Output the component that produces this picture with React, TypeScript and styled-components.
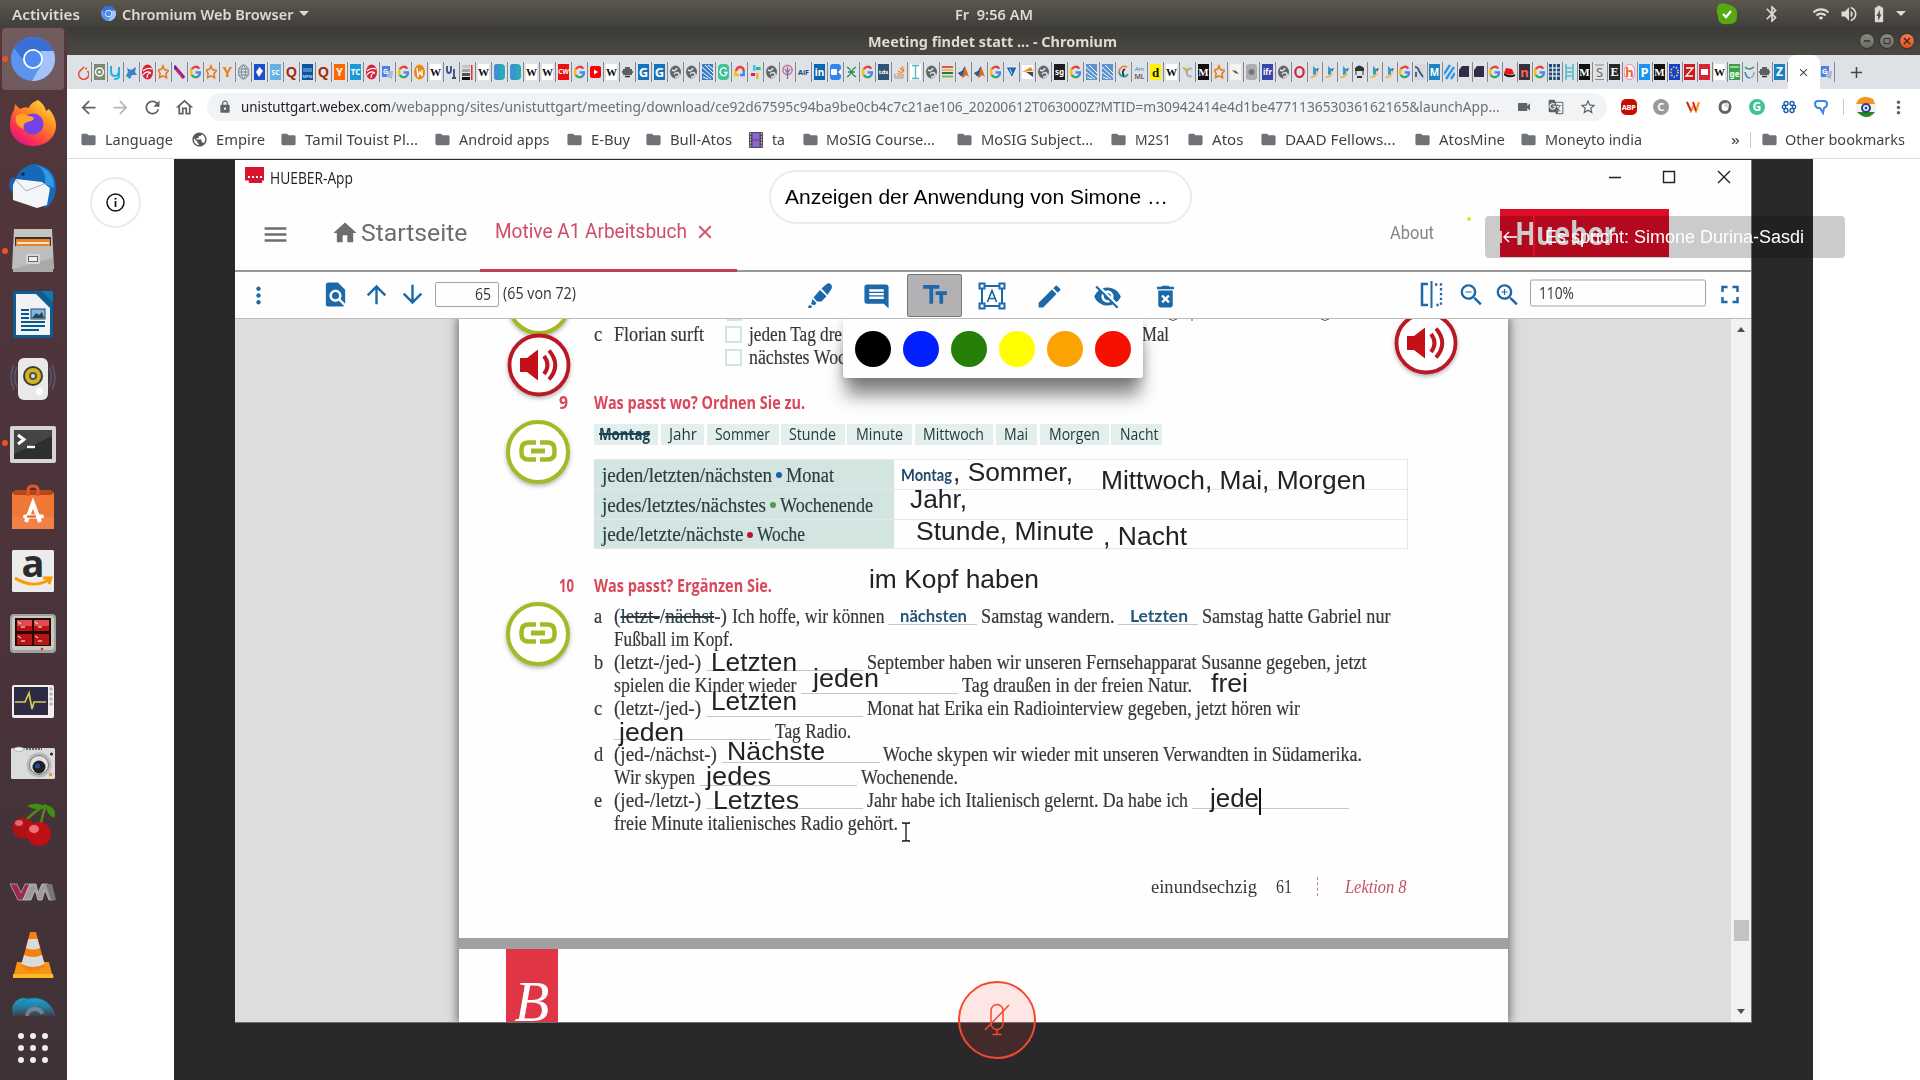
import React, { ReactNode, useLayoutEffect, useRef } from "react";
import styled, { createGlobalStyle } from "styled-components";
import {
  MdAdd, MdArrowBack, MdArrowDownward, MdArrowForward, MdArrowUpward, MdBatteryChargingFull, MdBluetooth,
  MdClose, MdComment, MdDeleteForever, MdEdit, MdFindInPage, MdFolder, MdFullscreen, MdHome, MdLock, MdMenu,
  MdMoreVert, MdOutlineHome, MdPublic, MdRefresh, MdStarBorder, MdTextFields, MdVideocam, MdVisibilityOff,
  MdVolumeUp, MdWifi, MdZoomIn, MdZoomOut, MdGTranslate,
} from "react-icons/md";

const ui = `"Noto Sans", "Open Sans", sans-serif`;
const serif = `"Liberation Serif", serif`;
const arial = `"Liberation Sans", sans-serif`;
const blue = "#1b69a9";

const Global = createGlobalStyle`
  * { box-sizing: border-box; }
  body { margin: 0; background: #fff; overflow: hidden; }
  svg { display: block; flex: none; }
`;

/* ---------- text squeezed or widened to a column width ---------- */
const FitBox = styled.span<{ $w: number; $ml?: number }>`
  display: inline-block;
  flex: none;
  width: ${(p) => p.$w}px;
  margin-left: ${(p) => p.$ml ?? 0}px;
  white-space: pre;
`;
const FitInk = styled.span`
  display: inline-block;
  transform-origin: 0 50%;
`;
function Fit({ w, ml, children, className }: { w: number; ml?: number; children: ReactNode; className?: string }) {
  const ref = useRef<HTMLSpanElement>(null);
  useLayoutEffect(() => {
    const el = ref.current;
    if (!el) return;
    el.style.transform = "none";
    const natural = el.getBoundingClientRect().width;
    if (natural) el.style.transform = `scaleX(${w / natural})`;
  }, [w]);
  return (
    <FitBox $w={w} $ml={ml} className={className}>
      <FitInk ref={ref}>{children}</FitInk>
    </FitBox>
  );
}

/* ---------- desktop shell ---------- */
const Desktop = styled.div`
  position: relative;
  width: 1920px;
  height: 1080px;
  overflow: hidden;
  display: flex;
  flex-direction: column;
  font-family: ${ui};
`;
const TopBar = styled.div`
  height: 27px;
  flex: none;
  display: flex;
  align-items: center;
  background: linear-gradient(#5b574f, #403f3a);
  color: #dfdbd2;
  font-size: 14.5px;
  font-weight: 600;
  line-height: 26px;
`;
const At = styled.div<{ $ml: number; $w?: number; $dy?: number; $c?: string }>`
  flex: none;
  display: flex;
  align-items: center;
  justify-content: center;
  margin-left: ${(p) => p.$ml}px;
  width: ${(p) => (p.$w ? p.$w + "px" : "auto")};
  color: ${(p) => p.$c ?? "inherit"};
  transform: translateY(${(p) => p.$dy ?? 0}px);
`;
const Below = styled.div`
  flex: 1;
  display: flex;
  min-height: 0;
`;
const Dock = styled.div`
  width: 67px;
  flex: none;
  display: flex;
  flex-direction: column;
  background: linear-gradient(#53373b, #4a333b 60%, #3f3237);
`;
const DockList = styled.div`
  height: 989px;
  overflow: hidden;
  display: flex;
  flex-direction: column;
`;
const DockCell = styled.div<{ $active?: boolean }>`
  height: 64px;
  flex: none;
  position: relative;
  display: flex;
  align-items: center;
  justify-content: center;
  padding-right: 1px;
  &::before {
    content: "";
    position: absolute;
    inset: 1px 3px 1px 2px;
    border-radius: 4px;
    background: ${(p) => (p.$active ? "rgba(255,255,255,.18)" : "none")};
  }
  svg { position: relative; }
`;
const RunDot = styled.i`
  position: absolute;
  left: 2px;
  top: 29px;
  width: 6px;
  height: 6px;
  border-radius: 3px;
  background: #e95420;
`;
const AppsGrid = styled.div`
  height: 64px;
  display: grid;
  grid-template-columns: repeat(3, 6px);
  gap: 6px;
  justify-content: center;
  align-content: center;
  padding-right: 1px;
  i { width: 6px; height: 6px; border-radius: 3px; background: #eee; }
`;
const Browser = styled.div`
  flex: 1;
  display: flex;
  flex-direction: column;
  min-width: 0;
`;
const TitleBar = styled.div`
  height: 28px;
  flex: none;
  display: flex;
  align-items: center;
  background: linear-gradient(#3b3a36, #4b4942);
  color: #dfdbd2;
  font-size: 14.5px;
  line-height: 26px;
  font-weight: 700;
`;
const WinBtn = styled.div<{ $close?: boolean }>`
  width: 16px;
  height: 16px;
  margin-right: 4px;
  border-radius: 8px;
  display: flex;
  align-items: center;
  justify-content: center;
  border: 1px solid #33322e;
  background: ${(p) => (p.$close ? "linear-gradient(#f07a50,#e0521f)" : "linear-gradient(#8b8a82,#6a6962)")};
`;
const TabStrip = styled.div`
  height: 34px;
  flex: none;
  display: flex;
  background: #dee1e6;
  padding-left: 9px;
`;
const Tab = styled.div<{ $w: number }>`
  width: ${(p) => p.$w}px;
  flex: none;
  display: flex;
  align-items: center;
  justify-content: flex-end;
  &::after {
    content: "";
    width: 1px;
    height: 20px;
    margin-left: 2px;
    background: #85888c;
  }
`;
const ActiveTab = styled.div`
  width: 32px;
  padding-right: 2px;
  display: flex;
  align-items: center;
  justify-content: center;
  border-radius: 8px 8px 0 0;
  background: #fff;
  color: #45494d;
`;
const NavBar = styled.div`
  height: 34px;
  flex: none;
  display: flex;
  align-items: center;
  background: #fff;
  padding: 2px 0 0 5.6px;
  color: #5f6368;
`;
const Slot = styled.div<{ $faint?: boolean }>`
  width: 32px;
  flex: none;
  display: flex;
  justify-content: center;
  opacity: ${(p) => (p.$faint ? 0.45 : 1)};
`;
const Omnibox = styled.div`
  width: 1400px;
  height: 28px;
  margin: 0 6px;
  flex: none;
  display: flex;
  align-items: center;
  border-radius: 14px;
  background: #f1f3f4;
  font-size: 14.5px;
  line-height: 26px;
`;
const Host = styled.span`color: #202124; display: flex; height: 28px;`;
const Path = styled.span`color: #6b6f74; display: flex; margin-right: 9px; height: 28px;`;
const Divider = styled.i<{ $ml: number }>`
  width: 1px;
  height: 16px;
  margin-left: ${(p) => p.$ml}px;
  background: #c5c8cc;
`;
const ExtDisc = styled.div<{ $bg: string; $size?: number }>`
  width: 16px;
  height: 16px;
  border-radius: ${(p) => (p.$bg === "#c70d00" ? 5 : 8)}px;
  display: flex;
  align-items: center;
  justify-content: center;
  background: ${(p) => p.$bg};
  color: #fff;
  font: 700 ${(p) => p.$size ?? 12}px/16px ${ui};
  letter-spacing: -0.3px;
`;
const Bookmarks = styled.div`
  height: 36px;
  flex: none;
  display: flex;
  align-items: center;
  background: #fff;
  border-bottom: 1px solid #dadce0;
  padding: 0 0 2px 12px;
  color: #3f4246;
  font-size: 14.5px;
  line-height: 33px;
`;
const Stage = styled.div`
  height: 921px;
  margin: 0 107px;
  padding: 1px 0 0 61px;
  background: #2a282b;
`;

/* ---------- shared application window ---------- */
const AppWindow = styled.div`
  width: 1517px;
  height: 863px;
  display: flex;
  flex-direction: column;
  background: #fefefe;
  border-bottom: 1px solid #6d6d6d;
  border-right: 1px solid #77775e;
`;
const AppTitle = styled.div`
  height: 36px;
  flex: none;
  display: flex;
  align-items: center;
  color: #222;
  font: 15.5px/36px "Open Sans", sans-serif;
`;
const AppIcon = styled.div`
  width: 19px;
  height: 16px;
  margin: -6px 6px 0 10px;
  background: #d9142f;
  clip-path: polygon(0 0, 100% 0, 100% 85%, 90% 85%, 90% 100%, 20% 100%, 20% 85%, 0 85%);
  display: flex;
  align-items: flex-end;
  justify-content: center;
  &::after { content: ""; width: 14px; height: 1px; margin-bottom: 4px; border-top: 2px dotted #fff; }
`;
const AppNav = styled.div`
  height: 76px;
  flex: none;
  display: flex;
  align-items: center;
  border-bottom: 2px solid #989898;
  font-family: Roboto, sans-serif;
  color: #6d6d6d;
`;
const NavTitle = styled.div`font-size: 24px; display: flex;`;
const BookTab = styled.div`
  width: 256.5px;
  height: 76px;
  margin: 2px 0 0 13px;
  padding: 0 0 4px 15px;
  flex: none;
  display: flex;
  align-items: center;
  border-bottom: 3px solid #c43b57;
  color: #cf4c66;
  font-size: 20px;
`;
const About = styled.div`font-size: 18px; color: #858585; display: flex; margin-top: -2px;`;
const YellowDot = styled.i`width: 4px; height: 4px; border-radius: 2px; margin: -28px 0 0 33px; background: #e8dc3a;`;
const Logo = styled.div`
  width: 169px;
  height: 48px;
  margin: 0 0 0 29.5px;
  padding-left: 15px;
  display: flex;
  align-items: center;
  background: #df0c27;
  color: #fff;
  font: 700 32px/46px "Open Sans", sans-serif;
`;
const Tools = styled.div`
  height: 47px;
  flex: none;
  position: relative;
  z-index: 2;
  display: flex;
  align-items: center;
  background: #fefefe;
  border-bottom: 1px solid #bdbdbd;
  color: ${blue};
  font: 16px/24px "Open Sans", sans-serif;
`;
const Field = styled.div<{ $w: number; $h: number }>`
  width: ${(p) => p.$w}px;
  height: ${(p) => p.$h}px;
  border: 1.5px solid #a3a3a3;
  border-radius: 2px;
  color: #333;
  display: flex;
  align-items: center;
  padding: 0 8px;
`;
const TextTool = styled.div`
  width: 55px;
  height: 43px;
  border: 1px solid #77777a;
  border-radius: 2px;
  background: #b3b1b4;
  display: flex;
  align-items: center;
  justify-content: center;
`;
const Palette = styled.div`
  position: absolute;
  left: 608px;
  top: 47px;
  width: 300px;
  height: 59px;
  padding: 0 12px;
  display: flex;
  gap: 12px;
  align-items: center;
  background: #fefefe;
  border-radius: 0 0 3px 3px;
  box-shadow: 0 20px 18px -3px rgba(60, 56, 60, 0.62), 0 2px 10px rgba(0, 0, 0, 0.2);
  clip-path: inset(0 -40px -70px -40px);
`;
const Swatch = styled.i<{ $c: string }>`width: 36px; height: 36px; border-radius: 18px; background: ${(p) => p.$c};`;
const Viewer = styled.div`
  flex: 1;
  min-height: 0;
  display: flex;
  overflow: hidden;
  background: #dedddd;
`;
const Sheets = styled.div`
  width: 1049px;
  margin: 0 223px 0 224px;
  flex: none;
  background: #a09fa1;
  box-shadow: 0 0 9px 2px rgba(50, 50, 50, 0.62);
`;
const Sheet = styled.div`
  position: relative;
  height: 619px;
  padding-left: 99.5px;
  background: #fefefe;
  overflow: hidden;
`;
const NextSheet = styled.div`
  height: 90px;
  margin-top: 11px;
  padding-left: 46.5px;
  background: #fefefe;
`;
const PartMark = styled.div`
  width: 52px;
  height: 90px;
  padding: 20px 0 0 9px;
  background: #e03545;
  color: #fff;
  font: italic 57px/66px ${serif};
`;
const Scroll = styled.div`
  width: 20px;
  flex: none;
  display: flex;
  flex-direction: column;
  align-items: center;
  background: #f2f1f4;
`;
const ScrollArrow = styled.i<{ $down?: boolean; $mt: number }>`
  margin-top: ${(p) => p.$mt}px;
  border: 4.5px solid transparent;
  border-top: ${(p) => (p.$down ? "5px solid #505050" : "0")};
  border-bottom: ${(p) => (p.$down ? "0" : "5px solid #505050")};
`;
const Thumb = styled.i`width: 15px; height: 21px; margin-top: 588px; background: #c3c2c5;`;

/* ---------- worksheet ---------- */
const Line = styled.div`
  height: 22.97px;
  display: flex;
  color: #38363b;
  font: 20px/22.97px ${serif};
  -webkit-text-stroke: 0.2px #38363b;
`;
const Tail = styled.div`padding-top: 4px;`;
const Label = styled.span`
  width: 20.5px;
  margin-left: 35px;
  flex: none;
  transform: scaleX(0.92);
  transform-origin: 0 50%;
`;
const Check = styled.i`
  width: 17px;
  height: 17px;
  margin: 3px 7px 0 21px;
  border: 2px solid #cfe6e0;
  flex: none;
`;
const Heading = styled.div<{ $mt: number }>`
  height: 24px;
  margin-top: ${(p) => p.$mt}px;
  display: flex;
  color: #d9485a;
  font: 700 17px/24px "Open Sans", sans-serif;
`;
const Chips = styled.div`display: flex; gap: 2.6px; margin: 9px 0 14px 35px;`;
const Chip = styled.div<{ $w: number; $bold?: boolean }>`
  width: ${(p) => p.$w}px;
  height: 21px;
  flex: none;
  display: flex;
  background: #e2efec;
  color: #26383d;
  font: ${(p) => (p.$bold ? 700 : 500)} 16px/21px "Open Sans", sans-serif;
`;
const Strike = styled.span`text-decoration: line-through; text-decoration-thickness: 1.5px; color: #1f4450;`;
const Table = styled.div`width: 814px; margin-left: 35px; border-top: 1px solid #e6e6ea; border-right: 1px solid #e6e6ea;`;
const Row = styled.div`
  height: 29.8px;
  display: grid;
  grid-template-columns: 300px 1fr;
  border-bottom: 1px solid #e6e6ea;
`;
const Key = styled.div`
  display: flex;
  align-items: center;
  padding: 1px 0 0 8px;
  background: #d2e5e1;
  color: #2e3c40;
  font: 20px/24px ${serif};
  -webkit-text-stroke: 0.2px #2e3c40;
`;
const Article = styled.i<{ $c: string }>`width: 6px; height: 6px; border-radius: 3px; margin: 1px 4px 0; background: ${(p) => p.$c};`;
const Pen = styled.div`
  display: flex;
  padding: 2px 0 0 7px;
  color: #24486c;
  font: 700 17px/26px Lato, sans-serif;
`;
const Body = styled.div`margin-top: 7px;`;
const Blank = styled.span<{ $w: number; $ml?: number; $pad?: number }>`
  width: ${(p) => p.$w}px;
  height: 20.5px;
  flex: none;
  display: flex;
  margin-left: ${(p) => p.$ml ?? 5}px;
  padding-left: ${(p) => p.$pad ?? 0}px;
  border-bottom: 1px solid #c3c6cc;
  color: #24577a;
  -webkit-text-stroke: 0;
  font: 700 17px/21px Lato, sans-serif;
`;
const Footer = styled.div`
  margin-top: 40.5px;
  padding-left: 592px;
  display: flex;
  color: #38363b;
  font: 19px/23px ${serif};
`;
const Dashes = styled.i`height: 19px; margin: 2px 27px 0 25px; border-left: 1.5px dashed #cf7d90;`;
const Lesson = styled.span`color: #c8506a; font-style: italic; display: flex;`;
const Pin = styled.div<{ $x: number; $y: number }>`
  position: absolute;
  left: ${(p) => p.$x - 35}px;
  top: ${(p) => p.$y - 35}px;
  filter: drop-shadow(0 2px 2px rgba(0, 0, 0, 0.3));
`;
const Note = styled.div<{ $x: number; $b: number }>`
  position: absolute;
  left: ${(p) => p.$x - 459}px;
  top: ${(p) => p.$b - 319 - 24}px;
  color: #222126;
  font: 25px/30px ${arial};
  display: flex;
`;
const Caret = styled.i`width: 2px; height: 27px; margin-top: 5px; background: #111;`;
const Pointer = styled.div`position: absolute; left: 441px; top: 503px;`;
const Cut = styled.div`position: absolute; left: 268px; top: 0;`;

/* ---------- conference overlays ---------- */
const InfoBtn = styled.div`
  position: absolute;
  left: 90px;
  top: 177px;
  width: 51px;
  height: 51px;
  border: 2px solid #ebebeb;
  border-radius: 26px;
  display: flex;
  align-items: center;
  justify-content: center;
`;
const Pill = styled.div`
  position: absolute;
  left: 769px;
  top: 170px;
  width: 423px;
  height: 54px;
  padding-left: 14px;
  display: flex;
  border: 2px solid #ebebeb;
  border-radius: 27px;
  background: #fff;
  color: #000;
  font: 20px/50px ${arial};
`;
const Speaker = styled.div`
  position: absolute;
  left: 1485px;
  top: 216px;
  width: 360px;
  height: 42px;
  padding-left: 15px;
  display: flex;
  align-items: center;
  border-radius: 4px;
  background: rgba(0, 0, 0, 0.2);
  color: #fff;
  font: 18px/42px ${arial};
  &::before { content: ""; position: absolute; left: 48px; top: 0; width: 2px; height: 41px; background: #df0c27; }
`;
const MicBtn = styled.div`
  position: absolute;
  left: 958px;
  top: 981px;
  width: 78px;
  height: 78px;
  border: 2px solid #f5492f;
  border-radius: 39px;
  background: rgba(245, 73, 47, 0.13);
  display: flex;
  align-items: center;
  justify-content: center;
`;

/* ---------- favicons ---------- */
const FavBox = styled.div`width: 11px; height: 16px; overflow: hidden; display: flex; justify-content: center;`;
const L = (bg: string, fg: string, t: string, size = 12, font = ui) => (
  <svg width="11" height="16" viewBox="0 0 11 16">
    <rect width="11" height="16" fill={bg} />
    <text x="5.5" y={8 + size * 0.36} textAnchor="middle" fontSize={size} fontWeight="700" fontFamily={font} fill={fg}>{t}</text>
  </svg>
);
const S = (kids: ReactNode) => <svg width="11" height="16" viewBox="0 0 11 16">{kids}</svg>;
const favs: Record<string, ReactNode> = {
  ring: S(<><path d="M6 3L2 7a5 5 0 1 0 7.5 0" stroke="#ee4c2c" strokeWidth="1.6" fill="none" /><circle cx="8" cy="4.5" r="1" fill="#ee4c2c" /></>),
  sage: S(<><rect width="11" height="16" fill="#7c8a74" /><circle cx="5.5" cy="8" r="4" fill="none" stroke="#fff" strokeWidth="1.4" /><circle cx="5.5" cy="8" r="1.5" fill="#fff" /></>),
  U: S(<path d="M1 2v5q0 5 4 5t4-6V3M9 6v6q0 3-5 3" stroke="#25b0e6" strokeWidth="2" fill="none" />),
  bird: S(<path d="M0 12l2-4-1-4 4 2 5-3-1 5 2 3-5 0-2 4z" fill="#3a86c8" />),
  swirl: S(<><ellipse cx="5.5" cy="8" rx="5.5" ry="7.5" fill="#d6223b" /><path d="M1 7q4-4 9-2M1 11q3-5 8-2M5 14q0-5 4-5" stroke="#fff" fill="none" strokeWidth="1.2" /></>),
  star: S(<path d="M5 2l1.7 3.8 4 .6-2.6 3 .4 4.4L5 11.8 1.6 13.6l.5-4.2L0 6l3.4-.6z" fill="none" stroke="#e87a17" strokeWidth="1.6" />),
  quill: S(<><path d="M0 2l10 12" stroke="#7b1fa2" strokeWidth="3.4" /><path d="M2 5l7 9" stroke="#e02a4b" strokeWidth="1.4" /></>),
  G: S(<g fill="none" strokeWidth="2.3"><path d="M9.3 4.6A4.7 5.2 0 0 0 1.7 5.3" stroke="#ea4335" /><path d="M1.7 5.3a5 5.4 0 0 0 0 5.4" stroke="#fbbc05" /><path d="M1.7 10.7a4.7 5.2 0 0 0 6.6 1.6" stroke="#34a853" /><path d="M8.3 12.3Q10 11 10 8.3H5.6" stroke="#4285f4" /></g>),
  Y: L("none", "#f08020", "Y", 15),
  ai: S(<g fill="none" stroke="#7e8a9a" strokeWidth="1"><ellipse cx="5.5" cy="8" rx="5" ry="7" /><ellipse cx="5.5" cy="8" rx="2" ry="7" /><path d="M0 5h11M0 8h11M0 11h11" /></g>),
  dia: S(<><rect width="11" height="16" fill="#1c4fd0" /><path d="M5.5 3L9 7 5 13 2 8z" fill="#fff" /></>),
  sc: L("#63b3e4", "#fff", "SC", 7),
  Q: L("none", "#a82400", "Q", 14, "Liberation Sans"),
  mpm: S(<><rect width="11" height="16" fill="#0b56a4" /><path d="M1 5h9M1 7h9" stroke="#8fb8e4" /><text x="5.5" y="14" textAnchor="middle" fontSize="4" fill="#fff" fontFamily={ui}>MPM</text></>),
  yc: L("#f60", "#fff", "Y", 11),
  tc: L("#1a9bd7", "#fff", "TC", 8),
  tr: S(<><rect y="2" width="8" height="11" fill="#4a80ee" /><path d="M5 7h6l-1 8-5-2z" fill="#a9b8d3" /><text x="1" y="10" fontSize="7" fontWeight="700" fill="#fff" fontFamily={ui}>G</text></>),
  orb: S(<><ellipse cx="5.5" cy="8" rx="5.5" ry="7.5" fill="#e98a15" /><path d="M3 4l1 8 2-4 2 4V6" stroke="#fff" fill="none" strokeWidth="1.3" /></>),
  W: L("#fff", "#111", "W", 11, "Liberation Serif"),
  ul: S(<path d="M1 2v4q0 3 2 3t2-3V2M8 5v9M6 14h4" stroke="#35507c" strokeWidth="1.8" fill="none" />),
  bars: S(<><rect y="1" width="8" height="3" fill="#c9c4c4" /><rect y="5" width="8" height="3" fill="#a9a4a4" /><rect y="9" width="8" height="3" fill="#555" /><rect y="13" width="8" height="3" fill="#111" /><rect x="9" y="1" width="1.5" height="15" fill="#d33" /></>),
  teal: S(<><rect width="11" height="16" rx="4" fill="#2aaab4" /><rect width="5" height="16" rx="3" fill="#4290d6" /></>),
  cw: L("#e91010", "#fff", "CW", 6.5),
  yt: S(<><rect y="2" width="11" height="12" rx="2" fill="#f00" /><path d="M4 5.5v5l4-2.5z" fill="#fff" /></>),
  bee: S(<><path d="M1 6h9M0 8h11M1 10h9M3 12.5h5M3 4h5" stroke="#333" strokeWidth="1.3" /></>),
  gb: L("#1374ba", "#fff", "G", 13),
  globe: S(<><ellipse cx="5.5" cy="8" rx="5.5" ry="6.5" fill="#63676b" /><path d="M2 6q3 2 5-2M4 10q4-3 5 0t-4 3" stroke="#dee1e6" strokeWidth="1.6" fill="none" /></>),
  rays: S(<><rect width="11" height="16" fill="#3c7cc6" /><path d="M0 3l11 10M0 8l9 7M3 1l8 8M1 13l5 2M6 1l5 4" stroke="#fff" /></>),
  rays2: S(<><rect width="11" height="16" fill="#5a93cf" /><path d="M0 3l11 10M0 8l9 7M3 1l8 8M1 13l5 2" stroke="#fff" /></>),
  gr: S(<><rect width="11" height="16" rx="4" fill="#3fc296" /><path d="M8.5 5.5a3.5 4 0 1 0 .5 3H6" stroke="#fff" fill="none" strokeWidth="1.3" /></>),
  cloud: S(<g fill="none" strokeWidth="2.4"><path d="M2 7q1-4 4-4t4 4" stroke="#ea4335" /><path d="M9.7 7v4H6" stroke="#4285f4" /><path d="M1.4 7v4H5" stroke="#fbbc05" /></g>),
  slack: S(<><rect x="3" y="1" width="2.4" height="6" fill="#36c5f0" /><rect x="6" y="3" width="4.6" height="3" fill="#2eb67d" /><rect x="1" y="9" width="4" height="3" fill="#e01e5a" /><rect x="6" y="9" width="2.4" height="6" fill="#ecb22e" /></>),
  tree: S(<g stroke="#d2718c" fill="none"><ellipse cx="5.5" cy="6" rx="4.6" ry="4.6" strokeWidth="1.6" /><path d="M5.5 3v12M3 5l2.500 4 2.500-4" stroke="#7a6bb0" strokeWidth="1.2" /></g>),
  aif: L("none", "#12467f", "AiF", 7),
  in: L("#0a66b4", "#fff", "in", 10),
  zoom: S(<><rect width="11" height="16" rx="3" fill="#2f86f3" /><rect x="1" y="5" width="6" height="6" rx="1" fill="#fff" /><path d="M8 8l3-3v6z" fill="#fff" /></>),
  X: S(<path d="M1 3q8 5 0 10M10 3q-8 5 0 10M2 8h7" stroke="#2b8a58" strokeWidth="1.3" fill="none" />),
  tds: L("#2f5275", "#fff", "tds", 6),
  so: S(<><path d="M1 10v4h8v-4" stroke="#999" fill="none" /><path d="M2.500 12h5M3 9.500l5 1M4 7l4.500 2M6 4l3.500 4M8 2l2 5" stroke="#f48024" strokeWidth="1.2" /></>),
  I: S(<><rect width="11" height="16" fill="#fff" /><path d="M2 1.500h7M2 14.500h7M5.500 1v14" stroke="#4ab9c4" strokeWidth="1.300" /></>),
  stripes: S(<><path d="M0 3h11" stroke="#e2574c" strokeWidth="2" /><path d="M0 6h11" stroke="#e6c14b" strokeWidth="2" /><path d="M0 9h11" stroke="#2e6f5e" strokeWidth="2" /><path d="M0 12.500h11" stroke="#84b844" strokeWidth="2" /></>),
  mat: S(<><path d="M0 9l4-2 3-5 4 11-3-2-3 3z" fill="#e06a1c" /><path d="M0 9l4-2 3-5-2 9-2 1z" fill="#255c9e" /></>),
  tri: S(<path d="M0 3h11L6 14zM4 5l2 5" fill="#1a67ae" stroke="#fff" strokeWidth=".8" />),
  play: S(<><rect y="1" width="11" height="14" fill="#fff" /><path d="M0 8l9-5 2 4z" fill="#f08c1c" /><path d="M4 8h7v5z" fill="#3a4a66" /></>),
  sg: L("#1d1d1f", "#fff", "sg", 8),
  eco: S(<g fill="none" strokeWidth="1.6"><path d="M9 3a5.500 6 0 0 0-8 5" stroke="#ef7d1a" /><path d="M1 8a5 6 0 0 0 9 2" stroke="#2a9ca4" /><path d="M7 5q-4 2-1 7" stroke="#222" /></g>),
  aml: S(<><text x="5.500" y="7" textAnchor="middle" fontSize="6" fontFamily={ui} fill="#2b83b8">Am</text><text x="5.500" y="15" textAnchor="middle" fontSize="7" fontFamily={ui} fill="#333">ML</text></>),
  d: L("#fff200", "#111", "d", 13, "Liberation Serif"),
  crow: S(<><path d="M0 3l5 1v6z" fill="#e8b437" /><path d="M10 5a3.500 4 0 1 0 0 7" fill="none" stroke="#aaa" strokeWidth="2" /></>),
  M: L("#111", "#fff", "M", 11, "Liberation Serif"),
  pic: S(<><rect width="11" height="16" fill="#f4f4f2" /><path d="M2 6l4 1 3 3-4-1z" fill="#555" /></>),
  blur: S(<><rect width="11" height="16" rx="3" fill="#aaadb1" /><circle cx="5.500" cy="8" r="3" fill="#77797d" /></>),
  ifr: L("#3546a8", "#fff", "ifr", 8),
  O: S(<ellipse cx="5.500" cy="8" rx="4.200" ry="5" fill="none" stroke="#d3233f" strokeWidth="2.200" />),
  duck: S(<><path d="M4 2l3 3v5l-3 1z" fill="#2c9ccf" /><path d="M1 13q5-1 8-5-1 6-8 6z" fill="#f3b229" /><path d="M7 5l3-1-2 4z" fill="#45515e" /></>),
  face: S(<><path d="M1 7V4q4-5 9 0v3" fill="#333" /><path d="M2 7v4M9 7v4" stroke="#333" /><path d="M3 13h5" stroke="#333" strokeWidth="2" /></>),
  N: S(<><rect width="11" height="16" fill="#d4d8de" /><path d="M1 3q3 0 4 4l4 6M2 13V8" stroke="#304a70" strokeWidth="1.600" fill="none" /></>),
  mb: L("#1c86c4", "#fff", "M", 10),
  slash: S(<path d="M0 10L6 1M2 15l8-12M7 15l4-6" stroke="#2798e8" strokeWidth="2.300" />),
  dark: S(<path d="M0 6l3-4h7v11H0z" fill="#342c42" />),
  hat: S(<><path d="M0 9l2-5 6 1 2 5q-6 2-10-1z" fill="#e11" /><path d="M0 10q5 4 11 1" stroke="#111" strokeWidth="1.800" fill="none" /></>),
  n: L("#35323a", "#ff5f57", "n", 13),
  grid: S(<><rect width="11" height="16" fill="#214a78" /><path d="M3.700 0v16M7.300 0v16M0 4h11M0 8h11M0 12h11" stroke="#fff" /></>),
  H: S(<path d="M2 0v16M9 0v16M2 4h7M2 8h7M2 12h7" stroke="#4fc0c7" strokeWidth="1.600" />),
  Su: S(<><text x="5.500" y="13" textAnchor="middle" fontSize="13" fontFamily={ui} fill="#66696c">S</text><path d="M1 1h9M1 15.500h9" stroke="#888" /></>),
  E: L("#26282b", "#fff", "E", 12, "Liberation Serif"),
  h: S(<><ellipse cx="5.500" cy="8" rx="5.500" ry="7.500" fill="#fff" stroke="#e87aa0" /><text x="5.500" y="13" textAnchor="middle" fontSize="13" fontWeight="700" fill="#f2602c" fontFamily={ui}>h</text></>),
  P: L("#1a94f0", "#fff", "P", 13),
  eu: S(<><rect width="11" height="16" fill="#173fd8" /><ellipse cx="5.500" cy="8" rx="3.500" ry="5" fill="none" stroke="#ffe11a" strokeDasharray="1.500 1.500" strokeWidth="1.600" /></>),
  zr: S(<><rect width="11" height="16" fill="#cc1b1b" /><path d="M2 4h7L2 12h7" stroke="#fff" fill="none" strokeWidth="1.300" /></>),
  cr: S(<><rect width="11" height="16" fill="#d52536" /><rect x="2" y="5" width="7" height="6" fill="#fff" /></>),
  ge: S(<><rect width="11" height="16" fill="#3ba149" /><text x="5.500" y="13" textAnchor="middle" fontSize="8" fontWeight="700" fill="#fff" fontFamily={ui}>ge</text><path d="M1 3h9" stroke="#fff" /></>),
  arcs: S(<g fill="none" strokeWidth="1.500"><path d="M1 3q4 4 9 0" stroke="#2d9c6a" /><path d="M1 8q1 6 5 6" stroke="#357ac0" /><path d="M10 8q0 4-3 6" stroke="#9ac" /></g>),
  Z: L("#1a7fc1", "#fff", "Z", 12),
};
const order =
  "ring sage U bird swirl star quill G star Y ai dia sc Q mpm Q yc tc swirl tr G orb W ul bars W teal teal W W cw G yt W bee gb gb globe globe rays gr cloud slack globe tree aif in zoom X G tds so I globe stripes mat mat G tri play globe sg G rays2 rays2 eco aml d W crow M star pic blur ifr globe O duck duck duck face duck duck G N mb slash dark dark G hat n G grid H M Su E h P M eu zr cr W ge arcs bee Z".split(" ");

/* ---------- launcher icons ---------- */
const I48 = (kids: ReactNode) => <svg width="48" height="48" viewBox="0 0 48 48">{kids}</svg>;
const Chromium = ({ s = 44 }: { s?: number }) => (
  <svg width={s} height={s} viewBox="0 0 44 44">
    <circle cx="22" cy="22" r="22" fill="#5b95ef" />
    <path d="M3 11A22 22 0 0 1 42.500 14H22L13 24z" fill="#3a6fd8" />
    <path d="M42.500 14A22 22 0 0 1 21 44L32 25 30 14z" fill="#a3c2fa" />
    <circle cx="22" cy="22" r="10" fill="#fff" />
    <circle cx="22" cy="22" r="8.200" fill="#4d8bf0" />
  </svg>
);
const dock: { icon: ReactNode; run?: boolean }[] = [
  { run: true, icon: <Chromium /> },
  { icon: I48(<><defs><linearGradient id="ff" x1="1" y1="0" x2=".3" y2="1"><stop offset="0" stopColor="#fff04a" /><stop offset=".45" stopColor="#ff8a1e" /><stop offset=".8" stopColor="#ff3350" /><stop offset="1" stopColor="#e0148a" /></linearGradient></defs><path d="M29 1q7 5 8 11l3-2q7 8 7 17a23 20 0 0 1-46 0Q1 17 5 11l1-6 5 5q5-3 9-1 1-5 9-8z" fill="url(#ff)" /><circle cx="24" cy="25" r="10.500" fill="#7542e5" /><path d="M7 17q7-5 12 0 6 0 6 3-3 3-7 3-5 2-3 7Q5 27 7 17z" fill="#ffa52a" /></>) },
  { icon: I48(<><path d="M24 1q22 2 23 22 0 16-12 23 2-5 0-9H12Q-2 30 1 18q2-5 6-3 3-10 17-14z" fill="#1769b8" /><path d="M24 1q14 4 12 20l9 4Q46 6 24 1z" fill="#2f9be6" /><path d="M4 22l3-6 26 3 8 6-3 17-10 3-24-8z" fill="#f4f5f9" /><path d="M7 17l10 11 18-7" stroke="#a9aebb" fill="none" /><circle cx="14" cy="11" r="1.800" fill="#0c2a55" /></>) },
  { run: true, icon: I48(<><path d="M5 2h38l2 40H3z" fill="#c4c4c2" /><path d="M6 10h36v10H6z" fill="#3b312b" /><path d="M7 12h34v8H7z" fill="#e8812b" /><path d="M8 15h32v2H8z" fill="#fbe3c0" /><path d="M4 19h40v26H4z" fill="#a9a9a7" /><path d="M4 19h40v12L4 42z" fill="#bdbdbb" /><rect x="17" y="27" width="14" height="10" rx="2" fill="#d7d7d5" /><rect x="19.500" y="29.500" width="9" height="5" fill="#eee" stroke="#666" /></>) },
  { icon: I48(<><path d="M6 0h26l12 12v33q0 2-2 2H6q-2 0-2-2V2q0-2 2-2z" fill="#0d5c92" /><path d="M32 0h12v12z" fill="#1276b8" /><path d="M7 3h20l14 14v27H7z" fill="#f1f2f3" /><path d="M12 19h8M12 23h8M12 27h8M12 31h24M12 35h24M12 39h18" stroke="#0b568c" strokeWidth="2" /><rect x="22" y="18" width="14" height="10" fill="#7cb8e8" stroke="#2a4b66" /><path d="M23 27l4-5 3 2 3-3 2 6z" fill="#34454c" /></>) },
  { icon: I48(<><path d="M5 10q-6 12 0 25M43 10q6 12 0 25M8 12q-5 10 0 20M40 12q5 10 0 20" stroke="#5e688f" fill="none" strokeWidth="1.500" opacity=".7" /><rect x="9" y="3" width="30" height="42" rx="6" fill="#e9e9e7" /><circle cx="24" cy="21" r="10" fill="#3c3c3a" /><circle cx="24" cy="21" r="8" fill="#d4b51f" /><circle cx="24" cy="21" r="4" fill="#55534a" /><circle cx="24" cy="21" r="2" fill="#ddd" /><rect x="27" y="33" width="7" height="7" rx="3" fill="#fff" /></>) },
  { run: true, icon: I48(<><rect x="1" y="7" width="46" height="37" rx="2" fill="#d6d4d4" /><rect x="5" y="11" width="38" height="29" fill="#2e2e2e" /><path d="M5 11h38v6L5 35z" fill="#454545" /><path d="M9 16l6 4.500-6 4.500" stroke="#fff" strokeWidth="3" fill="none" /><path d="M18 28h8" stroke="#fff" strokeWidth="2.400" /></>) },
  { icon: I48(<><path d="M3 10l4-3h34l4 3v36H3z" fill="#ef7836" /><path d="M3 10l4-3h34l4 3-3 2H6z" fill="#b9461b" /><path d="M19 13V7q0-4 5-4t5 4v6" stroke="#e0592a" strokeWidth="3" fill="none" /><path d="M3 34h42v12H3z" fill="#f08147" /><path d="M17 39l7-19 7 19" stroke="#fff" strokeWidth="4" fill="none" /><path d="M16 33.500h17" stroke="#fff" strokeWidth="4" strokeLinecap="round" /><path d="M18 33.500h9" stroke="#e95420" strokeWidth="2" /></>) },
  { icon: I48(<><rect x="3" y="3" width="42" height="42" rx="1.500" fill="#ececec" /><text x="24" y="30" textAnchor="middle" fontSize="38" fontWeight="700" fontFamily="Open Sans" fill="#2b2b2b">a</text><path d="M6 31q17 11 34 2M34 31l8 0-2 6" stroke="#ff9900" strokeWidth="2.800" fill="none" /></>) },
  { icon: I48(<><rect x="1" y="3" width="46" height="39" rx="4" fill="#9fa39c" /><rect x="3" y="5" width="42" height="34" rx="3" fill="#c8cbc5" /><rect x="6" y="7" width="36" height="28" fill="#2a0806" /><path d="M8 9h15v11H8zM25 9h15v11H25zM8 23h15v11H8zM25 23h15v11H25z" fill="#b81414" /><path d="M8 9h15v6H8zM25 9h15v6H25z" fill="#e04d50" /><path d="M9 11l3 2M26 11l3 2M9 25l3 2M26 25l3 2M12 16h4M29 16h4M12 30h4M29 30h4" stroke="#fff" /><circle cx="33" cy="38" r="1.300" fill="#e22" /></>) },
  { icon: I48(<><rect x="3" y="10" width="42" height="33" rx="2" fill="#f1efed" /><rect x="5" y="12" width="34" height="28" fill="#2d2a45" /><path d="M6 27h10l4-9 3 16 2-7h12" stroke="#d6cc4f" strokeWidth="1.700" fill="none" /><g fill="#b9b6b4"><circle cx="42" cy="14" r="1.800" /><circle cx="42" cy="19" r="1.800" /><circle cx="42" cy="24" r="1.800" /><circle cx="42" cy="29" r="1.800" /></g></>) },
  { icon: I48(<><rect x="2" y="9" width="44" height="31" rx="1.500" fill="#dbdbdb" /><path d="M4 10q6-4 12 0-6 5-12 0z" fill="#f3f3f3" stroke="#999" strokeWidth=".7" /><path d="M17 10h16" stroke="#666" strokeWidth="2" strokeDasharray="2 1" /><circle cx="30" cy="26" r="12.500" fill="#b9babb" /><circle cx="30" cy="26" r="9.500" fill="#e2e2e2" stroke="#777" /><circle cx="30" cy="28" r="6.500" fill="#1e2024" /><circle cx="28.500" cy="27" r="2.500" fill="#284c96" /><circle cx="42.500" cy="15" r="1.500" fill="#222" /><rect x="40" y="34" width="3" height="3" fill="#e8952b" /></>) },
  { icon: I48(<><path d="M16 18Q28 6 37 2M31 24Q34 10 37 2" stroke="#4d8b16" strokeWidth="2.500" fill="none" /><path d="M18 3q9-5 20 1-11 5-20-1zM37 2q12 3 8 13-8-4-8-13z" fill="#3f8f14" /><circle cx="14" cy="25" r="10.500" fill="#b01016" /><circle cx="30" cy="31" r="12" fill="#c00f14" /><ellipse cx="25" cy="26" rx="5" ry="4" fill="#ea7478" /><ellipse cx="10" cy="20" rx="4" ry="3" fill="#e06a6e" /></>) },
  { icon: I48(<><path d="M1 17h7l4 9 4-9h5l-7 16h-5z" fill="#9d2a4c" stroke="#9b9b9b" /><path d="M14 33l7-16h6l2 9 4-9h6l6 16h-5l-4-10-3 10h-4l-3-10-4 10z" fill="#9c9c9f" stroke="#cfcfcf" strokeWidth=".7" /><path d="M37 17h6l4 16h-5z" fill="#77777b" /></>) },
  { icon: I48(<><path d="M8 31h32l4 16H4z" fill="#f79413" /><path d="M4 43h40l.500 4H4z" fill="#ffb81f" /><path d="M21 1h6l9 34q-12 9-24 0z" fill="#f5800f" /><path d="M19.500 8h9l2.500 9q-7 3-14 0zM15 24q9 4 18 0l2.500 9q-11.500 6-23 0z" fill="#d8dbdc" /></>) },
  { icon: I48(<><defs><linearGradient id="sk" gradientUnits="userSpaceOnUse" x1="0" y1="3" x2="0" y2="22"><stop offset="0" stopColor="#1fa0cf" /><stop offset=".5" stopColor="#287a9c" /><stop offset="1" stopColor="#42343a" /></linearGradient></defs><circle cx="15" cy="15" r="12" fill="url(#sk)" /><circle cx="25" cy="24" r="21" fill="url(#sk)" stroke="#17779e" strokeWidth=".7" /><path d="M18 21q1-7 8-7 6 0 7 5" stroke="#8f929c" strokeWidth="4" fill="none" opacity=".7" /></>) },
];

const FolderMark = ({ w, ml, children }: { w: number; ml: number; children: string }) => (
  <>
    <At $ml={ml} $w={18}><MdFolder size={17} color="#6f7377" /></At>
    <Fit w={w} ml={7.3}>{children}</Fit>
  </>
);

const LinkPin = ({ x, y }: { x: number; y: number }) => (
  <Pin $x={x - 459} $y={y - 319}>
    <svg width="70" height="70" viewBox="0 0 70 70" fill="none" stroke="#a5b925">
      <circle cx="35" cy="35" r="30" fill="#fff" strokeWidth="4" />
      <path d="M33 25.500h-7.500q-7 0-7 7v3q0 7 7 7H33M37 25.500h7.500q7 0 7 7v3q0 7-7 7H37" strokeWidth="4.500" />
      <path d="M28 34h14" strokeWidth="5" />
    </svg>
  </Pin>
);
const AudioPin = ({ x, y }: { x: number; y: number }) => (
  <Pin $x={x - 459} $y={y - 319}>
    <svg width="70" height="70" viewBox="0 0 70 70" fill="none" stroke="#bb1824">
      <circle cx="35" cy="35" r="29.500" fill="#fff" strokeWidth="3.800" />
      <path d="M16 28h7l11-8.500v31L23 42h-7z" fill="#c41018" stroke="none" />
      <path d="M40 26q7 9 0 18M45 20.500q12.500 14.500 0 29" strokeWidth="4" />
    </svg>
  </Pin>
);

const notes: [string, number, number, number][] = [
  [", Sommer,", 953, 481, 120],
  ["Mittwoch, Mai, Morgen", 1101, 489, 265],
  ["Jahr,", 910, 508, 57],
  ["Stunde, Minute", 916, 540, 178],
  [", Nacht", 1103, 545, 84],
  ["im Kopf haben", 869, 588, 170],
  ["Letzten", 711, 671, 86],
  ["jeden", 813, 687, 66],
  ["frei", 1211, 692, 37],
  ["Letzten", 711, 710, 86],
  ["jeden", 619, 741, 65],
  ["Nächste", 727, 760, 98],
  ["jedes", 706, 785, 65],
  ["Letztes", 712.5, 809, 86],
];

export default function App() {
  return (
    <Desktop>
      <Global />
      <TopBar>
        <Fit w={68} ml={12}>Activities</Fit>
        <At $ml={20.500} $w={15}><Chromium s={15} /></At>
        <Fit w={171.500} ml={6}>Chromium Web Browser</Fit>
        <At $ml={6} $w={10}><svg width="10" height="5"><path d="M0 0h10L5 5z" fill="#dfdbd2" /></svg></At>
        <Fit w={78} ml={646}>Fr  9:56 AM</Fit>
        <At $ml={683} $w={22}>
          <svg width="22" height="22" viewBox="0 0 22 22"><path d="M3 1q5-2 11 1 8 2 7 11 0 9-9 8Q2 23 2 13-1 6 3 1z" fill="#57a912" /><path d="M7 11l3 3 5-6" stroke="#fff" strokeWidth="2.400" fill="none" /></svg>
        </At>
        <At $ml={24} $w={20}><MdBluetooth size={20} /></At>
        <At $ml={30} $w={18}><MdWifi size={18} /></At>
        <At $ml={9} $w={20}><MdVolumeUp size={20} /></At>
        <At $ml={10} $w={20}><MdBatteryChargingFull size={20} /></At>
        <At $ml={7} $w={10}><svg width="10" height="5"><path d="M0 0h10L5 5z" fill="#dfdbd2" /></svg></At>
      </TopBar>
      <Below>
        <Dock>
          <DockList>
            {dock.map((d, i) => (
              <DockCell key={i} $active={i === 0}>{d.icon}{d.run && <RunDot />}</DockCell>
            ))}
          </DockList>
          <AppsGrid>{Array.from({ length: 9 }, (_, i) => <i key={i} />)}</AppsGrid>
        </Dock>
        <Browser>
          <TitleBar>
            <Fit w={249} ml={801}>Meeting findet statt ... - Chromium</Fit>
            <At $ml={742}>
              <WinBtn><svg width="8" height="8"><path d="M1 4h6" stroke="#33322e" strokeWidth="1.500" /></svg></WinBtn>
              <WinBtn><svg width="8" height="8"><path d="M1 1.500h6v5H1z" stroke="#33322e" fill="none" /></svg></WinBtn>
              <WinBtn $close><svg width="8" height="8"><path d="M1 1l6 6M7 1L1 7" stroke="#4a1c0c" strokeWidth="1.200" /></svg></WinBtn>
            </At>
          </TitleBar>
          <TabStrip>
            {order.map((k, i) => <Tab key={i} $w={i < 77 ? 16 : 15}><FavBox>{favs[k]}</FavBox></Tab>)}
            <ActiveTab><MdClose size={13} /></ActiveTab>
            <Tab $w={15}><FavBox>{favs.tr}</FavBox></Tab>
            <At $ml={11.500}><MdAdd size={19} color="#45494d" /></At>
          </TabStrip>
          <NavBar>
            <Slot><MdArrowBack size={21} /></Slot>
            <Slot $faint><MdArrowForward size={21} /></Slot>
            <Slot><MdRefresh size={21} /></Slot>
            <Slot><MdOutlineHome size={21} /></Slot>
            <Omnibox>
              <At $ml={10} $w={16}><MdLock size={14} /></At>
              <Host><Fit w={150} ml={8}>unistuttgart.webex.com</Fit></Host>
              <Path><Fit w={1108.600}>/webappng/sites/unistuttgart/meeting/download/ce92d67595c94ba9be0cb4c7c21ae106_20200612T063000Z?MTID=m30942414e4d1be477113653036162165&launchApp...</Fit></Path>
              <Slot><MdVideocam size={16} /></Slot>
              <Slot><MdGTranslate size={16} /></Slot>
              <Slot><MdStarBorder size={18} /></Slot>
            </Omnibox>
            <Slot><ExtDisc $bg="#c70d00" $size={7.500}>ABP</ExtDisc></Slot>
            <Slot><ExtDisc $bg="#9a9a9a" $size={11}>C</ExtDisc></Slot>
            <Slot><svg width="14" height="12"><path d="M1 1l4 9 3-6 2 6 3-9" stroke="#f39a23" strokeWidth="2.200" fill="none" /><path d="M1 1l4 9M7 1l3 9" stroke="#d5202b" strokeWidth="1.800" /></svg></Slot>
            <Slot><svg width="14" height="16"><ellipse cx="7" cy="8" rx="5" ry="5.500" fill="none" stroke="#606468" strokeWidth="3" /><circle cx="8.500" cy="6" r="2.500" fill="#d9dcde" /></svg></Slot>
            <Slot><ExtDisc $bg="#3fc296" $size={12}>G</ExtDisc></Slot>
            <Slot><svg width="16" height="16" fill="none" stroke="#1c60ad" strokeWidth="1.400"><circle cx="5" cy="4.500" r="2" /><circle cx="11" cy="4.500" r="2" /><circle cx="5" cy="11.500" r="2" /><circle cx="11" cy="11.500" r="2" /><circle cx="3" cy="8" r="1.700" /><circle cx="13" cy="8" r="1.700" /></svg></Slot>
            <Slot><svg width="16" height="16" fill="none" stroke="#3a86e0" strokeWidth="2"><path d="M5 2h6q3 0 3 3t-3 4l-1 5-3-5H5Q2 8 2 5t3-3z" /></svg></Slot>
            <Divider $ml={6} />
            <At $ml={11.500} $w={22}>
              <svg width="22" height="22" viewBox="0 0 22 22"><ellipse cx="11" cy="11" rx="10.500" ry="11" fill="#f3f3ef" /><path d="M1 8Q5-3 18 3l2 5z" fill="#f7931e" /><path d="M2 16h18q-8 10-18 0z" fill="#218a21" /><circle cx="11" cy="12" r="4" fill="#dfe6f5" stroke="#27408f" strokeWidth="2" /><circle cx="11" cy="12" r="1.300" fill="#27408f" /></svg>
            </At>
            <At $ml={10.500}><MdMoreVert size={21} /></At>
          </NavBar>
          <Bookmarks>
            <FolderMark ml={0.500} w={68}>Language</FolderMark>
            <At $ml={18} $w={18}><MdPublic size={17} color="#55595d" /></At>
            <Fit w={49} ml={7}>Empire</Fit>
            <FolderMark ml={14.700} w={113}>Tamil Touist Pl...</FolderMark>
            <FolderMark ml={15.700} w={90.500}>Android apps</FolderMark>
            <FolderMark ml={16} w={39}>E-Buy</FolderMark>
            <FolderMark ml={15} w={62}>Bull-Atos</FolderMark>
            <At $ml={17} $w={14}>
              <svg width="14" height="16"><rect width="14" height="16" rx="1" fill="#4d4a5c" /><rect x="3.500" y="1" width="7" height="6.500" fill="#8f63d8" /><rect x="3.500" y="8.500" width="7" height="6.500" fill="#8f63d8" /><path d="M1.500 1v15M12.500 1v15" stroke="#ddd" strokeDasharray="1.500 1.500" /></svg>
            </At>
            <Fit w={13} ml={9.500}>ta</Fit>
            <FolderMark ml={15.700} w={109}>MoSIG Course...</FolderMark>
            <FolderMark ml={20} w={112}>MoSIG Subject...</FolderMark>
            <FolderMark ml={17} w={36}>M2S1</FolderMark>
            <FolderMark ml={16} w={31.500}>Atos</FolderMark>
            <FolderMark ml={15.500} w={110.500}>DAAD Fellows...</FolderMark>
            <FolderMark ml={18.500} w={66}>AtosMine</FolderMark>
            <FolderMark ml={15} w={97}>Moneyto india</FolderMark>
            <Fit w={9} ml={89}>»</Fit>
            <Divider $ml={10} />
            <FolderMark ml={9} w={120}>Other bookmarks</FolderMark>
          </Bookmarks>
          <Stage>
            <AppWindow>
              <AppTitle>
                <AppIcon />
                <Fit w={83}>HUEBER-App</Fit>
                <At $ml={1254.500} $w={14} $dy={-0.500}><svg width="14" height="14"><path d="M1 7h12" stroke="#222" strokeWidth="1.500" /></svg></At>
                <At $ml={40.500} $w={14} $dy={-1}><svg width="14" height="14"><path d="M1.500 1.500h11v11h-11z" stroke="#222" fill="none" strokeWidth="1.400" /></svg></At>
                <At $ml={41} $w={14} $dy={-1}><svg width="14" height="14"><path d="M1 1l12 12M13 1L1 13" stroke="#222" strokeWidth="1.400" /></svg></At>
              </AppTitle>
              <AppNav>
                <At $ml={26.400} $dy={1}><MdMenu size={29} /></At>
                <At $ml={41}><MdHome size={28} /></At>
                <NavTitle><Fit w={106.500} ml={1.500}>Startseite</Fit></NavTitle>
                <BookTab>
                  <Fit w={192}>Motive A1 Arbeitsbuch</Fit>
                  <At $ml={7} $dy={1}><MdClose size={22} /></At>
                </BookTab>
                <About><Fit w={44} ml={653}>About</Fit></About>
                <YellowDot />
                <Logo><Fit w={101}>Hueber</Fit></Logo>
              </AppNav>
              <Tools>
                <At $ml={10}><MdMoreVert size={27} /></At>
                <At $ml={49} $dy={-1}><MdFindInPage size={29} /></At>
                <At $ml={11.500} $dy={-1}><MdArrowUpward size={29} /></At>
                <At $ml={7} $dy={-1}><MdArrowDownward size={29} /></At>
                <At $ml={8} $dy={-1}><Field $w={64.500} $h={25}><Fit w={16} ml={31}>65</Fit></Field></At>
                <At $ml={4} $dy={-2} $c="#333"><Fit w={73}>(65 von 72)</Fit></At>
                <At $ml={229.500}>
                  <svg width="29" height="29" viewBox="0 0 29 29" fill={blue}><path d="M15.500 7.500L21 2.800q2-1.200 3.800.500 2 2 1 4L21.500 14zM14 9l6.500 6.200-5 5.300H11l-3.500-4zM6.500 18l4 4-1.800 2.200-3.700-1zM3 24l3.200 1L5 27H2z" /></svg>
                </At>
                <At $ml={27.500} $dy={1}><MdComment size={29} /></At>
                <At $ml={16}><TextTool><MdTextFields size={30} /></TextTool></At>
                <At $ml={16} $dy={1}>
                  <svg width="28" height="28" viewBox="0 0 28 28" fill="none" stroke={blue}><path d="M4 4h20v20H4z" strokeWidth="2" /><g fill="#fff" strokeWidth="2"><path d="M1.500 1.500h5v5h-5zM21.500 1.500h5v5h-5zM1.500 21.500h5v5h-5zM21.500 21.500h5v5h-5z" /></g><path d="M9.500 20L14 8.500 18.500 20M11 16.500h6" strokeWidth="1.700" /></svg>
                </At>
                <At $ml={29} $dy={1}><MdEdit size={29} /></At>
                <At $ml={28.500} $dy={1}><MdVisibilityOff size={29} /></At>
                <At $ml={29} $dy={1}><MdDeleteForever size={29} /></At>
                <At $ml={240.600} $dy={-1}>
                  <svg width="23" height="27" viewBox="0 0 23 27" fill="none" stroke={blue}><path d="M8 3H2v21h6" strokeWidth="2.500" /><path d="M11.500 0v27" strokeWidth="2" /><path d="M15 3.500h6V24h-6" strokeWidth="2.300" strokeDasharray="2.300 2.500" /></svg>
                </At>
                <At $ml={14} $dy={-0.500}><MdZoomOut size={29} /></At>
                <At $ml={7} $dy={-0.500}><MdZoomIn size={29} /></At>
                <At $ml={7.600} $dy={-2.500}><Field $w={176} $h={27}><Fit w={35}>110%</Fit></Field></At>
                <At $ml={9} $dy={-0.500}><MdFullscreen size={30} /></At>
                <Palette>
                  {["#000", "#0220fd", "#267f08", "#fffe00", "#faa302", "#f51000"].map((c) => <Swatch key={c} $c={c} />)}
                </Palette>
              </Tools>
              <Viewer>
                <Sheets>
                  <Sheet>
                    <Tail>
                      <Line><Label>c</Label><Fit w={90}>Florian surft</Fit><Check /><Fit w={93}>jeden Tag dre</Fit><Fit w={27} ml={299.500}>Mal</Fit></Line>
                      <Line><Label /><Fit w={90}>{" "}</Fit><Check /><Fit w={97}>nächstes Woc</Fit></Line>
                    </Tail>
                    <Heading $mt={22}><Fit w={9}>9</Fit><Fit w={211} ml={26}>Was passt wo? Ordnen Sie zu.</Fit></Heading>
                    <Chips>
                      <Chip $w={64.500} $bold><Fit w={51} ml={5}><Strike>Montag</Strike></Fit></Chip>
                      <Chip $w={43.500}><Fit w={28} ml={8}>Jahr</Fit></Chip>
                      <Chip $w={72}><Fit w={55} ml={8.500}>Sommer</Fit></Chip>
                      <Chip $w={63.500}><Fit w={47} ml={8}>Stunde</Fit></Chip>
                      <Chip $w={65}><Fit w={47} ml={9}>Minute</Fit></Chip>
                      <Chip $w={78}><Fit w={61} ml={8}>Mittwoch</Fit></Chip>
                      <Chip $w={41.500}><Fit w={24} ml={8.500}>Mai</Fit></Chip>
                      <Chip $w={69}><Fit w={51} ml={9.500}>Morgen</Fit></Chip>
                      <Chip $w={50.500}><Fit w={38.500} ml={8.500}>Nacht</Fit></Chip>
                    </Chips>
                    <Table>
                      <Row><Key><Fit w={170}>jeden/letzten/nächsten</Fit><Article $c="#1a5fa8" /><Fit w={48}>Monat</Fit></Key><Pen><Fit w={51}>Montag</Fit></Pen></Row>
                      <Row><Key><Fit w={164}>jedes/letztes/nächstes</Fit><Article $c="#4f9a52" /><Fit w={93}>Wochenende</Fit></Key><Pen /></Row>
                      <Row><Key><Fit w={141.500}>jede/letzte/nächste</Fit><Article $c="#b81535" /><Fit w={48}>Woche</Fit></Key><Pen /></Row>
                    </Table>
                    <Heading $mt={24.500}><Fit w={15}>10</Fit><Fit w={178} ml={20}>Was passt? Ergänzen Sie.</Fit></Heading>
                    <Body>
                      <Line>
                        <Label>a</Label><Fit w={113}>(<Strike>letzt-</Strike>/<Strike>nächst</Strike>-)</Fit><Fit w={152.500} ml={5}>Ich hoffe, wir können</Fit>
                        <Blank $w={88.500} $ml={3.500} $pad={11.500}><Fit w={67}>nächsten</Fit></Blank>
                        <Fit w={133.500} ml={4}>Samstag wandern.</Fit>
                        <Blank $w={80} $ml={4} $pad={11.500}><Fit w={58}>Letzten</Fit></Blank>
                        <Fit w={188.500} ml={3.500}>Samstag hatte Gabriel nur</Fit>
                      </Line>
                      <Line><Label /><Fit w={119}>Fußball im Kopf.</Fit></Line>
                      <Line><Label>b</Label><Fit w={87}>(letzt-/jed-)</Fit><Blank $w={157} /><Fit w={499.500} ml={4}>September haben wir unseren Fernsehapparat Susanne gegeben, jetzt</Fit></Line>
                      <Line><Label /><Fit w={182.500}>spielen die Kinder wieder</Fit><Blank $w={157} $ml={4.500} /><Fit w={230} ml={4}>Tag draußen in der freien Natur.</Fit></Line>
                      <Line><Label>c</Label><Fit w={87}>(letzt-/jed-)</Fit><Blank $w={157} /><Fit w={433} ml={4}>Monat hat Erika ein Radiointerview gegeben, jetzt hören wir</Fit></Line>
                      <Line><Label /><Blank $w={157} $ml={-0.500} /><Fit w={76} ml={4}>Tag Radio.</Fit></Line>
                      <Line><Label>d</Label><Fit w={103}>(jed-/nächst-)</Fit><Blank $w={158} $ml={4.500} /><Fit w={479} ml={3.500}>Woche skypen wir wieder mit unseren Verwandten in Südamerika.</Fit></Line>
                      <Line><Label /><Fit w={81}>Wir skypen</Fit><Blank $w={157} $ml={4.500} /><Fit w={97} ml={4}>Wochenende.</Fit></Line>
                      <Line><Label>e</Label><Fit w={87}>(jed-/letzt-)</Fit><Blank $w={157} /><Fit w={321} ml={3.500}>Jahr habe ich Italienisch gelernt. Da habe ich</Fit><Blank $w={157} $ml={4} /></Line>
                      <Line><Label /><Fit w={284}>freie Minute italienisches Radio gehört.</Fit></Line>
                    </Body>
                    <Footer>
                      <Fit w={106}>einundsechzig</Fit><Fit w={16} ml={19}>61</Fit><Dashes /><Lesson><Fit w={61.500}>Lektion 8</Fit></Lesson>
                    </Footer>
                    <LinkPin x={539} y={303} />
                    <AudioPin x={539} y={365} />
                    <LinkPin x={538} y={452} />
                    <LinkPin x={538} y={634} />
                    <AudioPin x={1426} y={343} />
                    {notes.map(([t, x, b, w], i) => <Note key={i} $x={x} $b={b}><Fit w={w}>{t}</Fit></Note>)}
                    <Note $x={1210} $b={806.500}><Fit w={49}>jede</Fit><Caret /></Note>
                    <Pointer><svg width="12" height="20"><path d="M2 1h3l1 1 1-1h3M2 19h3l1-1 1 1h3M6 2v16" stroke="#111" fill="none" strokeWidth="1.300" /></svg></Pointer>
                    <Cut><svg width="620" height="3"><path d="M0 1h15" stroke="#cfe6e0" strokeWidth="2" /><path d="M442 0q4 3 8 0M465 0v2M594 0q4 3 8 0" stroke="#555" fill="none" /></svg></Cut>
                  </Sheet>
                  <NextSheet><PartMark>B</PartMark></NextSheet>
                </Sheets>
                <Scroll><ScrollArrow $mt={8} /><Thumb /><ScrollArrow $down $mt={68} /></Scroll>
              </Viewer>
            </AppWindow>
          </Stage>
        </Browser>
      </Below>
      <InfoBtn>
        <svg width="19" height="19" viewBox="0 0 19 19" fill="none" stroke="#111"><circle cx="9.500" cy="9.500" r="8.500" strokeWidth="1.500" /><path d="M9.500 8v6" strokeWidth="1.700" /><path d="M9.500 4.800v1.800" strokeWidth="1.800" /></svg>
      </InfoBtn>
      <Pill><Fit w={383}>Anzeigen der Anwendung von Simone …</Fit></Pill>
      <Speaker>
        <svg width="17" height="14" fill="none" stroke="#fff" strokeWidth="1.400"><path d="M1 1v12M4 7h13M9 2L4 7l5 5" /></svg>
        <Fit w={259} ml={28}>Es spricht: Simone Durina-Sasdi</Fit>
      </Speaker>
      <MicBtn>
        <svg width="28" height="34" viewBox="0 0 28 34" fill="none" stroke="#f5492f" strokeWidth="1.500"><rect x="8" y="1.500" width="12" height="25" rx="6" /><path d="M14 26.500v5M9.500 31.500h9M2 27L26 2" /></svg>
      </MicBtn>
    </Desktop>
  );
}
